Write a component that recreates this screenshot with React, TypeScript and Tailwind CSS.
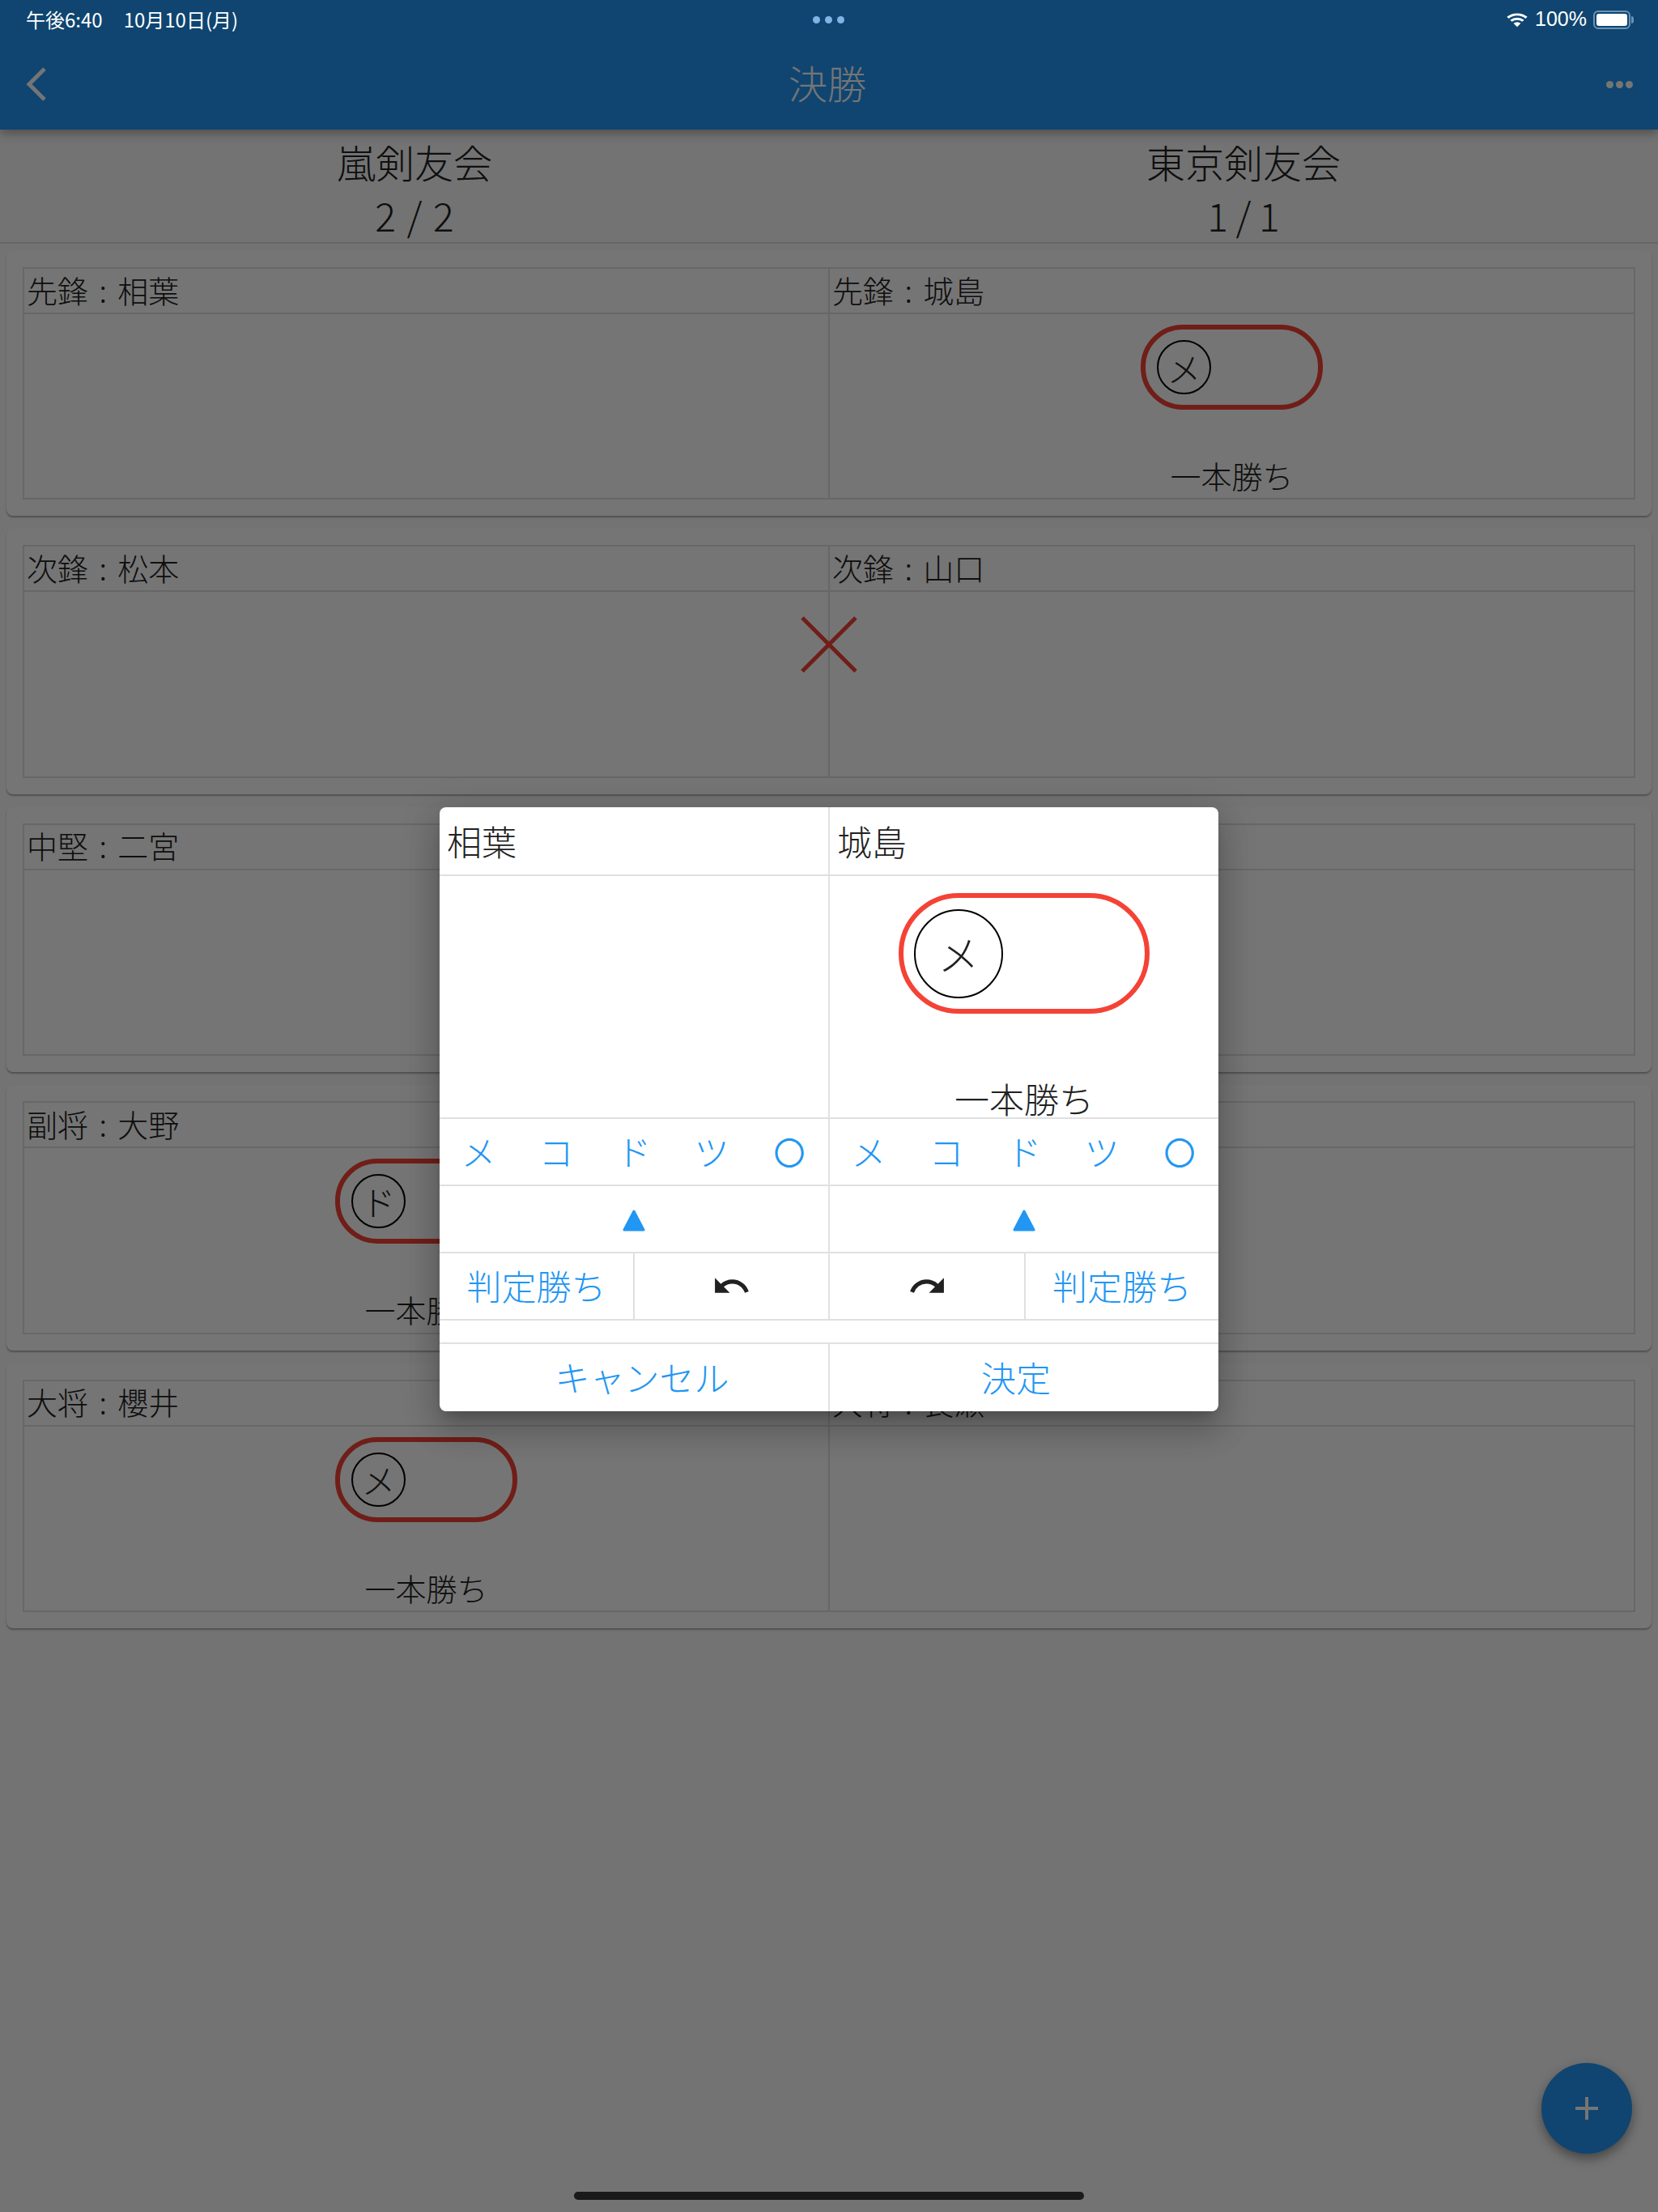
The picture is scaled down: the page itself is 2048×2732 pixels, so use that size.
import React from "react";
import { MdUndo, MdRedo } from "react-icons/md";

const jp = { fontFamily: '"Noto Sans CJK JP", sans-serif' };

function Pill({ kana }: { kana: string }) {
  return (
    <div className="mt-[13px] flex h-[105px] w-[225px] items-center rounded-[52px] border-[6px] border-[#f44336] pl-[14px]">
      <div className="flex h-[67px] w-[67px] items-center justify-center rounded-full border-2 border-black text-[42px] font-light leading-none text-[#212121]">
        {kana}
      </div>
    </div>
  );
}

function Side({ label, kana, first }: { label: string; kana?: string; first?: boolean }) {
  return (
    <div className={`flex flex-col ${first ? "w-[993px]" : "w-[995px] border-l-2 border-[#e0e0e0]"}`}>
      <div className="flex h-[56px] items-center border-b-2 border-[#e0e0e0] pb-[3px] pl-[3px] text-[38px] font-light leading-none text-[#212121] [word-spacing:5px]">
        {label}
      </div>
      <div className="flex flex-1 flex-col items-center">
        {kana && (
          <>
            <Pill kana={kana} />
            <div className="mt-[56px] text-[38px] font-light leading-[50px] text-[#212121]">一本勝ち</div>
          </>
        )}
      </div>
    </div>
  );
}

function Match({ left, right, lk, rk, cross }: { left: string; right: string; lk?: string; rk?: string; cross?: boolean }) {
  return (
    <div className="relative mx-2 mb-4 h-[327.4px] rounded-lg bg-white p-5 shadow-[0_2px_2px_rgba(0,0,0,0.3)]">
      <div className="flex h-full border-2 border-[#e0e0e0]">
        <Side label={left} kana={lk} first />
        <Side label={right} kana={rk} />
      </div>
      {cross && (
        <svg className="absolute left-[980px] top-[107px]" width="72" height="72" viewBox="0 0 72 72">
          <path d="M3 3 L69 69 M69 3 L3 69" stroke="#f44336" strokeWidth="5" fill="none" />
        </svg>
      )}
    </div>
  );
}

function Kana() {
  return (
    <div className="flex h-[83px] items-center border-b-2 border-[#e0e0e0] pb-[3px] text-[43px] font-light leading-none text-[#2196f3]">
      {["メ", "コ", "ド", "ツ"].map((k) => (
        <div key={k} className="flex w-1/5 justify-center">{k}</div>
      ))}
      <div className="flex w-1/5 justify-center text-[39px] font-normal">〇</div>
    </div>
  );
}

function Triangle() {
  return (
    <div className="flex h-[83px] items-center justify-center border-b-2 border-[#e0e0e0] pt-[4px]">
      <svg width="28" height="28" viewBox="0 0 28 28">
        <path d="M14 2 L26 25 H2 Z" fill="#2196f3" stroke="#2196f3" strokeWidth="3" strokeLinejoin="round" />
      </svg>
    </div>
  );
}

export default function App() {
  return (
    <div className="relative h-[2732px] w-[2048px] overflow-hidden bg-[#fafafa]" style={jp}>
      <header className="flex h-[160px] items-end bg-[#2196f3] shadow-[0_4px_12px_rgba(0,0,0,0.35)]">
        <div className="flex h-[112px] w-full items-center justify-between pl-[32px] pr-[31px]">
          <svg width="26" height="44" viewBox="0 0 26 44">
            <path d="M23 3 L4 22 L23 41" stroke="white" strokeWidth="5" fill="none" />
          </svg>
          <div className="ml-[2px] pb-[6px] text-[48px] font-light leading-none text-white">決勝</div>
          <div className="flex gap-[3px]">
            <span className="h-[9px] w-[9px] rounded-full bg-white" />
            <span className="h-[9px] w-[9px] rounded-full bg-white" />
            <span className="h-[9px] w-[9px] rounded-full bg-white" />
          </div>
        </div>
      </header>

      <div className="flex h-[141px] border-b-2 border-[#e0e0e0] pt-[6px] text-[48px] font-light leading-[66px] text-[#212121]">
        <div className="flex w-1/2 flex-col items-center"><div>嵐剣友会</div><div className="[word-spacing:3px]">2 / 2</div></div>
        <div className="flex w-1/2 flex-col items-center"><div>東京剣友会</div><div className="[word-spacing:-1px]">1 / 1</div></div>
      </div>

      <main className="pt-[9px]">
        <Match left="先鋒 : 相葉" right="先鋒 : 城島" rk="メ" />
        <Match left="次鋒 : 松本" right="次鋒 : 山口" cross />
        <Match left="中堅 : 二宮" right="中堅 : 国分" />
        <Match left="副将 : 大野" right="副将 : 松岡" lk="ド" />
        <Match left="大将 : 櫻井" right="大将 : 長瀬" lk="メ" />
      </main>

      <div className="absolute left-[1904px] top-[2548px] flex h-[112px] w-[112px] items-center justify-center rounded-full bg-[#2196f3] shadow-[0_6px_14px_rgba(0,0,0,0.4)]">
        <svg width="28" height="28" viewBox="0 0 28 28"><path d="M14 0 V28 M0 14 H28" stroke="white" strokeWidth="4" /></svg>
      </div>

      <div className="absolute inset-0 bg-black/54" />

      <div className="absolute left-[543px] top-[997px] w-[962px] overflow-hidden rounded-lg bg-white text-[43px] leading-none shadow-[0_24px_38px_3px_rgba(0,0,0,0.14),0_9px_46px_8px_rgba(0,0,0,0.12),0_11px_15px_-7px_rgba(0,0,0,0.2)]">
        <div className="flex">
          <div className="w-[480px] text-[#212121]">
            <div className="flex h-[85px] items-center border-b-2 border-[#e0e0e0] pl-[9px] font-light">相葉</div>
            <div className="h-[300px] border-b-2 border-[#e0e0e0]" />
          </div>
          <div className="w-[482px] border-l-2 border-[#e0e0e0] text-[#212121]">
            <div className="flex h-[85px] items-center border-b-2 border-[#e0e0e0] pl-[9px] font-light">城島</div>
            <div className="flex h-[300px] flex-col items-center overflow-hidden border-b-2 border-[#e0e0e0]">
              <div className="mt-[21px] flex h-[149px] w-[310px] items-center rounded-[75px] border-[6px] border-[#f44336] pl-[13px]">
                <div className="flex h-[110px] w-[110px] items-center justify-center rounded-full border-2 border-black text-[51px] font-light">メ</div>
              </div>
              <div className="mt-[83px] font-light">一本勝ち</div>
            </div>
          </div>
        </div>
        <div className="flex">
          <div className="w-[480px]">
            <Kana />
            <Triangle />
            <div className="flex h-[83px] border-b-2 border-[#e0e0e0]">
              <div className="flex w-[239px] items-center justify-center pb-[2px] font-light text-[#2196f3]">判定勝ち</div>
              <div className="flex w-[241px] items-center justify-center border-l-2 border-[#e0e0e0] text-[#212121]"><MdUndo size={49} /></div>
            </div>
          </div>
          <div className="w-[482px] border-l-2 border-[#e0e0e0]">
            <Kana />
            <Triangle />
            <div className="flex h-[83px] border-b-2 border-[#e0e0e0]">
              <div className="flex w-[240px] items-center justify-center text-[#212121]"><MdRedo size={49} /></div>
              <div className="flex w-[240px] items-center justify-center border-l-2 border-[#e0e0e0] pb-[2px] font-light text-[#2196f3]">判定勝ち</div>
            </div>
          </div>
        </div>
        <div className="h-[29px] border-b-2 border-[#e0e0e0]" />
        <div className="flex h-[83px] font-light text-[#2196f3]">
          <div className="flex w-[480px] items-center justify-center pb-[3px] pl-[20px]">キャンセル</div>
          <div className="flex w-[482px] items-center justify-center border-l-2 border-[#e0e0e0] pb-[3px] pr-[20px]">決定</div>
        </div>
      </div>

      <div className="absolute left-0 right-0 top-0 flex h-[48px] items-center justify-between pl-[32px] pr-[30px] text-[24px] text-white">
        <div className="flex gap-[26px]"><span>午後6:40</span><span>10月10日(月)</span></div>
        <div className="absolute left-[1004px] top-[20px] flex gap-[6px]">
          <span className="h-[9px] w-[9px] rounded-full bg-[#7fb5e6]" />
          <span className="h-[9px] w-[9px] rounded-full bg-[#7fb5e6]" />
          <span className="h-[9px] w-[9px] rounded-full bg-[#7fb5e6]" />
        </div>
        <div className="flex items-center gap-[8px]">
          <svg width="28" height="19" viewBox="0 0 28 22" preserveAspectRatio="none">
            <path d="M14 21 L9.5 16 A7 7 0 0 1 18.5 16 Z" fill="white" />
            <path d="M6.5 12.5 A11 11 0 0 1 21.5 12.5 M2.5 8 A16.5 16.5 0 0 1 25.5 8" stroke="white" strokeWidth="3.4" fill="none" />
          </svg>
          <span className="text-[25px]" style={{ fontFamily: '"Liberation Sans", sans-serif' }}>100%</span>
          <div className="flex items-center">
            <div className="h-[23px] w-[46px] rounded-[6px] border-2 border-[#6a93b5] p-[2px]">
              <div className="h-full w-full rounded-[3px] bg-white" />
            </div>
            <div className="ml-[1px] h-[9px] w-[3px] rounded-r-sm bg-[#6a93b5]" />
          </div>
        </div>
      </div>

      <div className="absolute left-[709px] top-[2707px] h-[10px] w-[630px] rounded-full bg-[#1a1a1a]" />
    </div>
  );
}
